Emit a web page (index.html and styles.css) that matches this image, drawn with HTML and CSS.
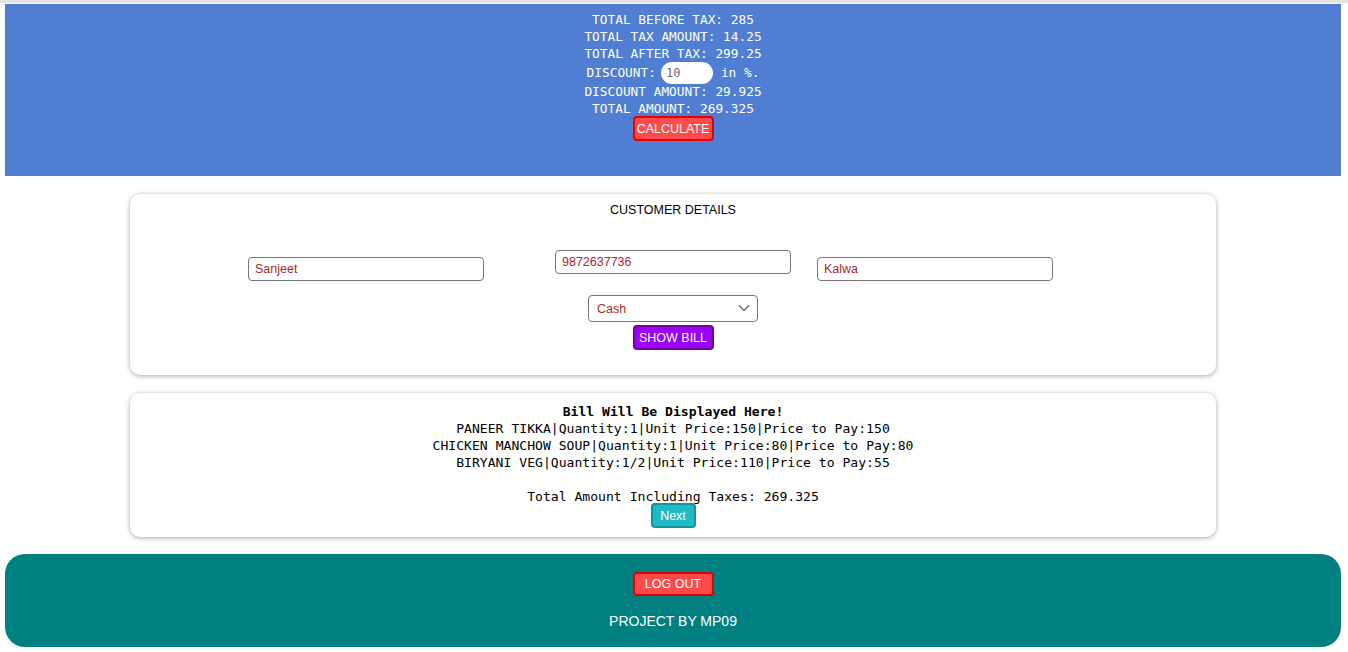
FILE: index.html
```html
<!DOCTYPE html>
<html lang="en">
<head>
<meta charset="utf-8">
<title>Billing</title>
<link rel="stylesheet" href="styles.css">
</head>
<body>
<div class="topline"></div>
<header class="summary">
  <div class="row"><span class="lbl">TOTAL BEFORE TAX:</span> <span>285</span></div>
  <div class="row"><span class="lbl">TOTAL TAX AMOUNT:</span> <span>14.25</span></div>
  <div class="row"><span class="lbl">TOTAL AFTER TAX:</span> <span>299.25</span></div>
  <div class="row discount"><span class="lbl">DISCOUNT:</span> <input class="disc-input" type="text" value="10"> <span>in %.</span></div>
  <div class="row"><span class="lbl">DISCOUNT AMOUNT:</span> <span>29.925</span></div>
  <div class="row"><span class="lbl">TOTAL AMOUNT:</span> <span>269.325</span></div>
  <button class="btn btn-red calc">CALCULATE</button>
</header>

<section class="card customer">
  <div class="card-title">CUSTOMER DETAILS</div>
  <div class="fields">
    <input class="field f-name" type="text" value="Sanjeet">
    <input class="field f-phone" type="text" value="9872637736">
    <input class="field f-addr" type="text" value="Kalwa">
  </div>
  <div class="select-wrap">
    <select class="pay">
      <option>Cash</option>
      <option>Card</option>
      <option>UPI</option>
    </select>
    <svg class="chev" width="12" height="8" viewBox="0 0 12 8" aria-hidden="true"><path d="M1 1.5 L6 6.5 L11 1.5" fill="none" stroke="#555" stroke-width="1.1"/></svg>
  </div>
  <button class="btn btn-purple">SHOW BILL</button>
</section>

<section class="card bill">
  <div class="bill-head">Bill Will Be Displayed Here!</div>
  <div class="bill-line">PANEER TIKKA|Quantity:1|Unit Price:150|Price to Pay:150</div>
  <div class="bill-line">CHICKEN MANCHOW SOUP|Quantity:1|Unit Price:80|Price to Pay:80</div>
  <div class="bill-line">BIRYANI VEG|Quantity:1/2|Unit Price:110|Price to Pay:55</div>
  <div class="bill-line blank">&nbsp;</div>
  <div class="bill-line">Total Amount Including Taxes: 269.325</div>
  <button class="btn btn-teal">Next</button>
</section>

<footer class="footer">
  <button class="btn btn-red logout">LOG OUT</button>
  <div class="credit">PROJECT BY MP09</div>
</footer>
</body>
</html>
```

FILE: styles.css
```css
html, body {
  margin: 0;
  padding: 0;
  background: #ffffff;
}

body {
  font-family: "Liberation Sans", Arial, sans-serif;
  width: 1348px;
  height: 652px;
  overflow: hidden;
}

.topline {
  height: 3px;
  background: #e3e3e3;
  margin-bottom: 1px;
}

.summary {
  margin: 0 7px 0 5px;
  height: 172px;
  box-sizing: border-box;
  padding-top: 7px;
  background: #507ed3;
  color: #ffffff;
  font-family: "DejaVu Sans Mono", "Liberation Mono", monospace;
  font-size: 12.8px;
  display: flex;
  flex-direction: column;
  align-items: center;
}

.row {
  line-height: 17px;
  height: 17px;
  white-space: nowrap;
}

.row.discount {
  height: 21px;
  line-height: 19px;
  display: flex;
  align-items: center;
  gap: 4px;
}

.disc-input {
  width: 52px;
  height: 22px;
  box-sizing: border-box;
  border: none;
  border-radius: 11px;
  background: #ffffff;
  color: #6b6b6b;
  font-family: "DejaVu Sans Mono", "Liberation Mono", monospace;
  font-size: 12px;
  padding: 0 5px;
  margin: 0 4px 0 1px;
  outline: none;
}

.btn {
  font-family: "Liberation Sans", Arial, sans-serif;
  font-size: 12.5px;
  color: #ffffff;
  border-radius: 4px;
  cursor: pointer;
  box-sizing: border-box;
  padding: 0;
  white-space: nowrap;
}

.btn-red {
  background: #ff4b4b;
  border: 2px solid #e80000;
  width: 81px;
  height: 25px;
}

.calc {
  margin-top: -1px;
}

.card {
  width: 1086px;
  box-sizing: border-box;
  margin: 18px auto 0 130px;
  background: #ffffff;
  border-radius: 10px;
  box-shadow: 0 1px 5px rgba(0, 0, 0, 0.35);
  display: flex;
  flex-direction: column;
  align-items: center;
}

.customer {
  height: 181px;
  padding-top: 9px;
}

.card-title {
  font-size: 12.5px;
  color: #000000;
  line-height: 15px;
}

.fields {
  align-self: stretch;
  display: flex;
  align-items: flex-start;
  padding-left: 118px;
  margin-top: 32px;
}

.field {
  width: 236px;
  height: 24px;
  box-sizing: border-box;
  border: 1px solid #767676;
  border-radius: 4px;
  padding: 0 6px;
  font-family: "Liberation Sans", Arial, sans-serif;
  font-size: 12.5px;
  color: #a52a2a;
  background: #ffffff;
}

.f-name { margin-top: 7px; }
.f-phone { margin-left: 71px; }
.f-addr { margin-left: 26px; margin-top: 7px; }

.select-wrap {
  position: relative;
  margin-top: 14px;
  width: 170px;
  height: 27px;
}

.pay {
  -webkit-appearance: none;
  appearance: none;
  width: 170px;
  height: 27px;
  box-sizing: border-box;
  border: 1px solid #767676;
  border-radius: 4px;
  background: #ffffff;
  color: #a52a2a;
  font-family: "Liberation Sans", Arial, sans-serif;
  font-size: 12.5px;
  padding: 0 8px;
}

.chev {
  position: absolute;
  right: 8px;
  top: 9px;
  pointer-events: none;
}

.btn-purple {
  margin-top: 3px;
  background: #9900ff;
  border: 2px solid #7a0096;
  width: 81px;
  height: 25px;
}

.bill {
  height: 144px;
  padding-top: 10px;
  font-family: "DejaVu Sans Mono", "Liberation Mono", monospace;
  font-size: 13.1px;
  color: #000000;
}

.bill-head {
  font-weight: bold;
  line-height: 17px;
}

.bill-line {
  line-height: 17px;
  white-space: nowrap;
}

.btn-teal {
  margin-top: -2px;
  background: #1fbac6;
  border: 2px solid #13939c;
  height: 25px;
  width: 45px;
}

.footer {
  margin: 17px 7px 0 5px;
  height: 93px;
  box-sizing: border-box;
  background: #008080;
  border-radius: 20px;
  display: flex;
  flex-direction: column;
  align-items: center;
  padding-top: 18px;
}

.logout {
  height: 24px;
}

.credit {
  margin-top: 17px;
  color: #ffffff;
  font-size: 14px;
  line-height: 16px;
}
```
